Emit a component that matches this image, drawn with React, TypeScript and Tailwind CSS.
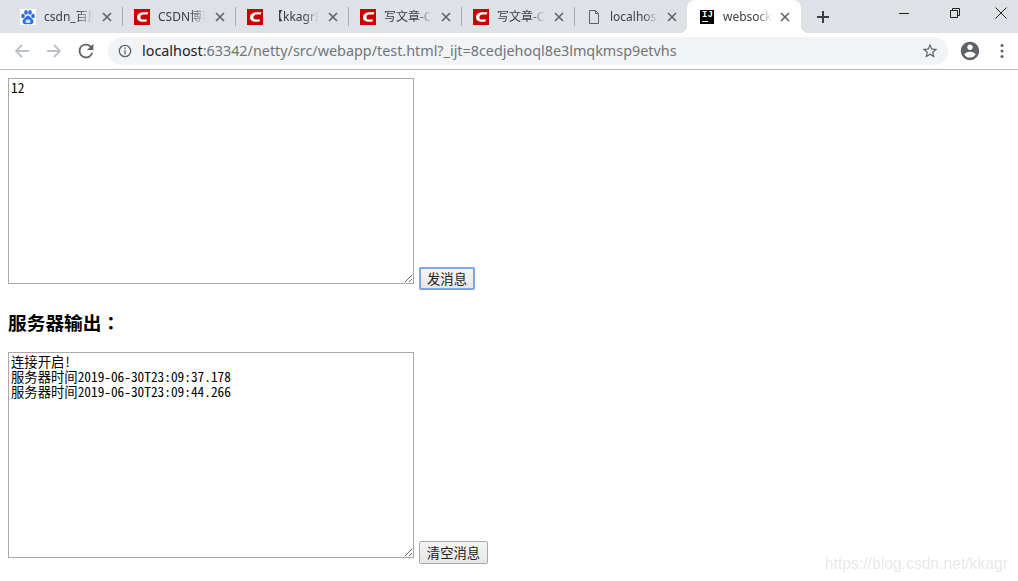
import React from "react";

const uiFont = { fontFamily: '"Noto Sans", "Noto Sans CJK SC", sans-serif' };

function Baidu() {
  return (
    <svg viewBox="0 0 16 16" className="w-4 h-4 shrink-0">
      <rect width="16" height="16" fill="#fff" />
      <ellipse cx="3" cy="7" rx="1.8" ry="2.3" fill="#2f6fe4" />
      <ellipse cx="6" cy="3.4" rx="1.8" ry="2.4" fill="#2f6fe4" />
      <ellipse cx="10" cy="3.4" rx="1.8" ry="2.4" fill="#2f6fe4" />
      <ellipse cx="13" cy="7" rx="1.8" ry="2.3" fill="#2f6fe4" />
      <path d="M8 6.500c-1.700 0-2.200 1.600-3.300 2.600C3.500 10.200 2.500 11 2.500 12.600 2.500 14.500 4 15.500 5.500 15.300c1-.1 1.700-.4 2.500-.4s1.500.3 2.500.4c1.500.2 3-.8 3-2.700 0-1.600-1-2.400-2.200-3.500C10.200 8.100 9.700 6.500 8 6.500z" fill="#2f6fe4" />
      <rect x="5.500" y="10.500" width="5" height="3.500" rx="1.500" fill="#cfe0fb" />
    </svg>
  );
}

function Csdn() {
  return (
    <svg viewBox="0 0 16 16" className="w-4 h-4 shrink-0">
      <rect width="16" height="16" fill="#c90000" />
      <path d="M14.500 3.200H9.300C5.600 3.200 3 5.400 3 8.300s2.300 4.500 5.600 4.500h3.600l1-2.300H9c-1.600 0-2.600-.8-2.600-2.100 0-1.500 1.300-2.800 3.100-2.800h4z" fill="#fff" />
    </svg>
  );
}

function Doc() {
  return (
    <svg viewBox="0 0 16 16" className="w-4 h-4 shrink-0" fill="none" stroke="#5f6368" strokeWidth="1">
      <path d="M3.500 1.500h6l3 3v10h-9z" />
      <path d="M9.500 1.500v3h3" />
    </svg>
  );
}

function Idea() {
  return (
    <div className="w-[14px] h-[14px] shrink-0 bg-black flex flex-col items-start pl-[2px] mr-[1px]">
      <span className="text-white text-[9px] leading-[10px] font-bold" style={{ fontFamily: '"Liberation Mono", monospace' }}>IJ</span>
      <span className="w-[6px] h-[1px] bg-white mt-[1px]" />
    </div>
  );
}

function X() {
  return (
    <svg viewBox="0 0 10 10" className="w-[10px] h-[10px] shrink-0" stroke="#5f6368" strokeWidth="1.600" fill="none">
      <path d="M1 1l8 8M9 1l-8 8" />
    </svg>
  );
}

const tabs = [
  { icon: <Baidu />, title: "csdn_百度" },
  { icon: <Csdn />, title: "CSDN博客" },
  { icon: <Csdn />, title: "【kkagr的" },
  { icon: <Csdn />, title: "写文章-CSDN" },
  { icon: <Csdn />, title: "写文章-CSDN" },
  { icon: <Doc />, title: "localhost" },
];

function Tab({ icon, title, sep, first }: { icon: React.ReactNode; title: string; sep: boolean; first: boolean }) {
  return (
    <div className={first ? "w-[113px] h-[33px] flex items-center pl-[11px] shrink-0" : "w-[113px] h-[33px] flex items-center pl-[12px] shrink-0"}>
      {icon}
      <span
        className={
          first
            ? "ml-2 w-[50px] overflow-hidden whitespace-nowrap text-[12px] text-[#3c4043] [mask-image:linear-gradient(to_right,#000_68%,transparent_98%)]"
            : "ml-2 w-[49px] overflow-hidden whitespace-nowrap text-[12px] text-[#3c4043] [mask-image:linear-gradient(to_right,#000_68%,transparent_98%)]"
        }
      >
        {title}
      </span>
      <span className="ml-2"><X /></span>
      <span className={sep ? "ml-[10px] w-[1px] h-[19px] bg-[#a6a9ad] mr-[-1px]" : "hidden"} />
    </div>
  );
}

function TabStrip() {
  return (
    <div className="h-[33px] bg-[#dee1e6] flex items-start pl-[9px]" style={uiFont}>
      {tabs.map((t, i) => (
        <Tab key={i} icon={t.icon} title={t.title} sep={i < 5} first={i === 0} />
      ))}
      <div className="relative w-[114px] h-[33px] bg-white rounded-t-[8px] flex items-center pl-[13px] shrink-0">
        <span className="absolute left-[-8px] bottom-0 w-2 h-2 bg-[radial-gradient(circle_at_0_0,#dee1e6_8px,#fff_8.500px)]" />
        <span className="absolute right-[-8px] bottom-0 w-2 h-2 bg-[radial-gradient(circle_at_100%_0,#dee1e6_8px,#fff_8.500px)]" />
        <Idea />
        <span className="ml-2 w-[50px] overflow-hidden whitespace-nowrap text-[12px] text-[#3c4043] [mask-image:linear-gradient(to_right,#000_68%,transparent_98%)]">
          websocket
        </span>
        <span className="ml-[7px]"><X /></span>
      </div>
      <div className="ml-[15px] h-[33px] flex items-center">
        <svg viewBox="0 0 14 14" className="w-[14px] h-[14px]" stroke="#3c4043" strokeWidth="2" fill="none">
          <path d="M7 1v12M1 7h12" />
        </svg>
      </div>
      <div className="ml-auto flex items-start h-[26px]">
        <div className="w-[46px] h-[26px] flex items-center justify-center mr-[5px]">
          <span className="w-[10px] h-[1px] bg-[#222]" />
        </div>
        <div className="w-[46px] h-[26px] flex items-center justify-center">
          <svg viewBox="0 0 10 10" className="w-[10px] h-[10px]" fill="none" stroke="#222" strokeWidth="1">
            <path d="M.5 2.500h7v7h-7zM2.500 2.500v-2h7v7h-2" />
          </svg>
        </div>
        <div className="w-[46px] h-[26px] flex items-center justify-center mr-[-6px]">
          <svg viewBox="0 0 12 12" className="w-3 h-3" fill="none" stroke="#222" strokeWidth="1">
            <path d="M.5.500l11 11M11.500.500l-11 11" />
          </svg>
        </div>
      </div>
    </div>
  );
}

function Toolbar() {
  return (
    <div className="h-[37px] bg-white border-b border-[#b7b7b7] flex items-center" style={uiFont}>
      <div className="w-[108px] flex items-center pl-[14px] gap-[16px] shrink-0">
        <svg viewBox="0 0 16 16" className="w-4 h-4" fill="none" stroke="#bdc1c6" strokeWidth="1.800">
          <path d="M15 8H2M8 2L2 8l6 6" />
        </svg>
        <svg viewBox="0 0 16 16" className="w-4 h-4" fill="none" stroke="#bdc1c6" strokeWidth="1.800">
          <path d="M1 8h13M8 2l6 6-6 6" />
        </svg>
        <svg viewBox="0 0 24 24" className="w-[22px] h-[22px] ml-[-3px]" fill="#5f6368">
          <path d="M17.650 6.350A7.958 7.958 0 0 0 12 4a8 8 0 1 0 7.730 10h-2.080A6 6 0 1 1 12 6c1.660 0 3.140.690 4.220 1.780L13 11h7V4l-2.350 2.350z" />
        </svg>
      </div>
      <div className="w-[840px] h-[28px] rounded-full bg-[#f1f3f4] flex items-center pl-[10px] pr-[9px]">
        <svg viewBox="0 0 16 16" className="w-[14px] h-[14px] shrink-0" fill="none" stroke="#5f6368" strokeWidth="1.500">
          <circle cx="8" cy="8" r="6.500" />
          <path d="M8 7v5M8 4v1.600" />
        </svg>
        <span className="ml-[10px] text-[14.360px] text-[#202124] whitespace-nowrap">
          localhost<span className="text-[#70757a]">:63342/netty/src/webapp/test.html?_ijt=8cedjehoql8e3lmqkmsp9etvhs</span>
        </span>
        <svg viewBox="0 0 24 24" className="w-[18px] h-[18px] ml-auto shrink-0" fill="#5f6368">
          <path d="M22 9.240l-7.190-.620L12 2 9.190 8.630 2 9.240l5.460 4.730L5.820 21 12 17.270 18.180 21l-1.630-7.030L22 9.240zM12 15.400l-3.760 2.270 1-4.280-3.320-2.880 4.380-.380L12 6.100l1.710 4.040 4.380.380-3.320 2.880 1 4.280L12 15.400z" />
        </svg>
      </div>
      <svg viewBox="0 0 24 24" className="w-[22px] h-[22px] ml-[11px] shrink-0" fill="#5f6368">
        <path d="M12 2C6.480 2 2 6.480 2 12s4.480 10 10 10 10-4.480 10-10S17.520 2 12 2zm0 3c1.660 0 3 1.340 3 3s-1.340 3-3 3-3-1.340-3-3 1.340-3 3-3zm0 14.200a7.200 7.200 0 0 1-6-3.220c.030-1.990 4-3.080 6-3.080 1.990 0 5.970 1.090 6 3.080a7.200 7.200 0 0 1-6 3.220z" />
      </svg>
      <svg viewBox="0 0 4 16" className="w-1 h-4 ml-[19px] shrink-0" fill="#5f6368">
        <circle cx="2" cy="2.500" r="1.500" />
        <circle cx="2" cy="8" r="1.500" />
        <circle cx="2" cy="13.500" r="1.500" />
      </svg>
    </div>
  );
}

const monoStack = { fontFamily: '"Noto Sans Mono CJK SC", "Noto Sans CJK SC", monospace' };
const btnStack = { fontFamily: '"Noto Sans CJK SC", sans-serif' };

function Field({ value, label, focused }: { value: string; label: string; focused?: boolean }) {
  return (
    <div className="flex items-end gap-[5px]">
      <textarea
        readOnly
        value={value}
        className="w-[406px] h-[206px] mb-[6px] border border-[#a9a9a9] px-[2px] pt-[1px] pb-[2px] text-[13.330px] leading-[15px] text-black outline-none resize block"
        style={monoStack}
      />
      <button
        className={
          focused
            ? "h-[23px] w-[56px] rounded-[2px] border-2 border-[#7ba5e6] bg-[linear-gradient(#f5f5f5,#e6e6e6)] text-[13.330px] leading-none text-[#222] whitespace-nowrap"
            : "h-[23px] w-[69px] rounded-[2px] border border-[#a9a9a9] bg-[linear-gradient(#f5f5f5,#e6e6e6)] text-[13.330px] leading-none text-[#222] whitespace-nowrap"
        }
        style={btnStack}
      >
        {label}
      </button>
    </div>
  );
}

export default function App() {
  return (
    <div className="relative w-[1018px] h-[581px] overflow-hidden bg-white">
      <TabStrip />
      <Toolbar />
      <main className="pt-2 pl-2">
        <Field value="12" label="发消息" focused />
        <h3 className="mt-[19px] mb-[18px] h-[25px] text-[18.720px] leading-[25px] font-bold text-black" style={btnStack}>
          服务器输出<span style={{ fontFamily: '"Noto Sans CJK TC", sans-serif' }}>：</span>
        </h3>
        <Field value={"连接开启!\n服务器时间2019-06-30T23:09:37.178\n服务器时间2019-06-30T23:09:44.266"} label="清空消息" />
      </main>
      <div
        className="absolute right-[10px] bottom-[6px] text-[15.700px] leading-[22px] text-[#e8e8e8] blur-[0.4px]"
        style={{ fontFamily: '"Liberation Sans", sans-serif' }}
      >
        https://blog.csdn.net/kkagr
      </div>
    </div>
  );
}
